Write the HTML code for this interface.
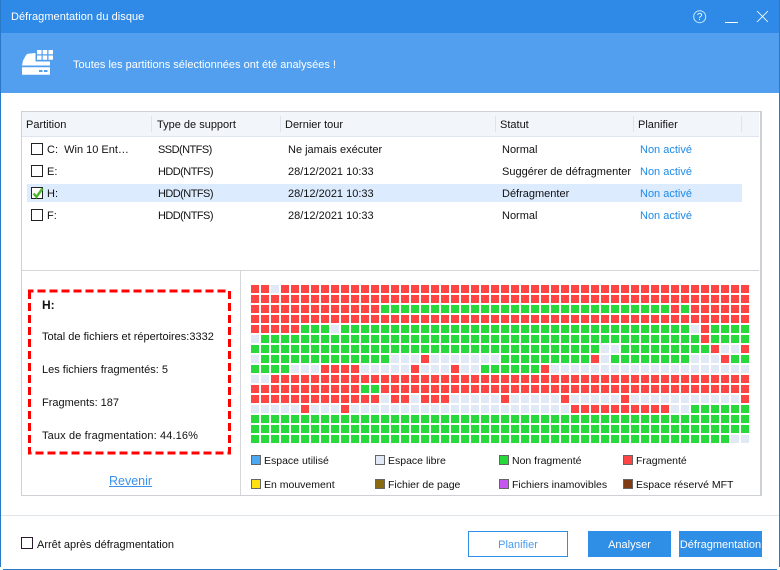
<!DOCTYPE html>
<html lang="fr"><head><meta charset="utf-8"><title>Défragmentation du disque</title>
<style>
html,body{margin:0;padding:0;background:#fff}
#w{position:relative;width:780px;height:570px;overflow:hidden;background:#fff;font-family:"Liberation Sans",sans-serif;font-size:11px;color:#111}
#w div{position:absolute}
.t{position:absolute;white-space:nowrap;line-height:14px;height:14px}
.cb{position:absolute;width:10px;height:10px;border:1px solid #222;background:#fff}
.l{color:#1e8ae8}
.lg{position:absolute;width:8px;height:8px;border:1px solid #666}
.s{font-size:10.5px}
.h{letter-spacing:-.55px}
.btn{position:absolute;text-align:center;line-height:28px;height:26px;font-size:11px}
</style></head><body>
<div id="w">
<div style="left:0;top:0;width:780px;height:33px;background:#2e8ae6"></div>
<div style="left:0;top:33px;width:780px;height:60px;background:#529fef"></div>
<div style="left:0;top:0;width:1px;height:567px;background:#2a78c8"></div>
<div style="left:779px;top:0;width:1px;height:567px;background:#2a78c8"></div>
<div style="left:3px;top:569px;width:774px;height:1px;background:#2a78c8"></div>
<span class="t" style="left:11px;top:10px;color:#fff;letter-spacing:.05px">Défragmentation du disque</span>
<svg style="position:absolute;left:690px;top:8px" width="85" height="18" viewBox="0 0 85 18" fill="none">
<circle cx="9.700" cy="8.700" r="6" stroke="#c4ecff" stroke-width="1"/>
<text x="9.700" y="12" font-family="Liberation Sans" font-size="10" fill="#fff" text-anchor="middle">?</text>
<path d="M35 14.500h13" stroke="#fff" stroke-width="1"/>
<path d="M67 3l11 11M78 3L67 14" stroke="#fff" stroke-width=".85"/>
</svg>
<svg style="position:absolute;left:0;top:0" width="60" height="80" fill="#fff">
<path d="M22 65.500L23 60.500L25 57Q26 54.300 28 53.700L35.500 53V61.500H50V65.500Z"/>
<path d="M22 67.300h28v7.500H22z"/>
<path d="M39 70h3.500v2H39zM44 70h3.500v2H44z" fill="#529fef"/>
<path d="M37 50h4.500v4.300H37zM42.700 50h4.500v4.300h-4.500zM48.500 50H53v4.300h-4.500zM37 55.500h4.500v4.300H37zM42.700 55.500h4.500v4.300h-4.500zM48.500 55.500H53v4.300h-4.500z"/>
</svg>
<span class="t" style="left:73px;top:58px;color:#fff">Toutes les partitions sélectionnées ont été analysées !</span>

<div style="left:21px;top:111px;width:738px;height:383px;border:1px solid #cdd0d4;border-width:1px 2px 1px 1px"></div>
<div style="left:22px;top:112px;width:737px;height:24px;background:#f2f5fa;border-bottom:1px solid #dfe5f0"></div>
<div style="left:151px;top:116px;width:1px;height:16px;background:#dfe4ec"></div>
<div style="left:280px;top:116px;width:1px;height:16px;background:#dfe4ec"></div>
<div style="left:495px;top:116px;width:1px;height:16px;background:#dfe4ec"></div>
<div style="left:633px;top:116px;width:1px;height:16px;background:#dfe4ec"></div>
<div style="left:741px;top:116px;width:1px;height:16px;background:#dfe4ec"></div>
<span class="t" style="left:26px;top:118px">Partition</span>
<span class="t" style="left:157px;top:118px">Type de support</span>
<span class="t" style="left:285px;top:118px">Dernier tour</span>
<span class="t" style="left:500px;top:118px">Statut</span>
<span class="t" style="left:638px;top:118px">Planifier</span>

<div style="left:27px;top:184px;width:715px;height:18px;background:#dcebfd"></div>
<span class="cb" style="left:31px;top:143px"></span>
<span class="cb" style="left:31px;top:165px"></span>
<span class="cb" style="left:31px;top:187px"></span>
<span class="cb" style="left:31px;top:209px"></span>
<svg style="position:absolute;left:31px;top:186px" width="14" height="14"><path d="M2.500 7.500l3 3.300 6-8.300" fill="none" stroke="#4cb82a" stroke-width="2.400"/></svg>
<span class="t" style="left:47px;top:143px">C:&nbsp; Win 10 Ent…</span>
<span class="t" style="left:47px;top:165px">E:</span>
<span class="t" style="left:47px;top:187px">H:</span>
<span class="t" style="left:47px;top:209px">F:</span>
<span class="t h" style="left:158px;top:143px">SSD(NTFS)</span>
<span class="t h" style="left:158px;top:165px">HDD(NTFS)</span>
<span class="t h" style="left:158px;top:187px">HDD(NTFS)</span>
<span class="t h" style="left:158px;top:209px">HDD(NTFS)</span>
<span class="t" style="left:288px;top:143px">Ne jamais exécuter</span>
<span class="t" style="left:288px;top:165px">28/12/2021 10:33</span>
<span class="t" style="left:288px;top:187px">28/12/2021 10:33</span>
<span class="t" style="left:288px;top:209px">28/12/2021 10:33</span>
<span class="t" style="left:502px;top:143px">Normal</span>
<span class="t" style="left:502px;top:165px">Suggérer de défragmenter</span>
<span class="t" style="left:502px;top:187px">Défragmenter</span>
<span class="t" style="left:502px;top:209px">Normal</span>
<span class="t l" style="left:640px;top:143px">Non activé</span>
<span class="t l" style="left:640px;top:165px">Non activé</span>
<span class="t l" style="left:640px;top:187px">Non activé</span>
<span class="t l" style="left:640px;top:209px">Non activé</span>

<div style="left:22px;top:270px;width:737px;height:1px;background:#d4d6da"></div>
<div style="left:240px;top:270px;width:1px;height:225px;background:#d4d6da"></div>
<svg style="position:absolute;left:27px;top:288px" width="206" height="169" fill="none"><rect x="2.500" y="3" width="200" height="162" stroke="#ff0000" stroke-width="3" stroke-dasharray="8 4" stroke-dashoffset="4"/></svg>
<span class="t" style="left:42px;top:298px;font-weight:700;font-size:12px">H:</span>
<span class="t" style="left:42px;top:330px">Total de fichiers et répertoires:3332</span>
<span class="t" style="left:42px;top:363px">Les fichiers fragmentés: 5</span>
<span class="t" style="left:42px;top:396px">Fragments: 187</span>
<span class="t" style="left:42px;top:429px;letter-spacing:.13px">Taux de fragmentation: 44.16%</span>
<span class="t" style="left:109px;top:474px;font-size:12.500px;color:#3a92ea;text-decoration:underline">Revenir</span>

<svg style="position:absolute;left:0;top:0" width="780" height="570" fill="none" stroke-width="8" stroke-dasharray="8 2">
<path stroke="#ff4444" d="M251 289h18M281 289h468M251 299h498M251 309h128M671 309h8M691 309h58M251 319h498M251 329h48M701 329h8M701 339h8M711 349h8M741 349h8M421 359h8M591 359h8M721 359h8M321 369h38M411 369h8M451 369h8M541 369h8M271 379h478M251 389h108M381 389h368M251 399h128M391 399h18M421 399h28M501 399h8M561 399h8M621 399h8M741 399h8M301 409h8M341 409h8M571 409h98"/>
<path stroke="#28d93c" d="M381 309h288M681 309h8M301 329h28M341 329h348M711 329h38M261 339h438M711 339h38M251 349h348M621 349h88M261 359h128M501 359h88M611 359h78M731 359h18M251 369h38M481 369h58M361 389h18M691 409h58M251 419h498M251 429h498M251 439h478"/>
<path stroke="#e0e9f5" d="M271 289h8M331 329h8M691 329h8M251 339h8M601 349h18M721 349h18M251 359h8M391 359h28M431 359h68M601 359h8M691 359h28M291 369h28M361 369h48M421 369h28M461 369h18M551 369h198M251 379h18M381 399h8M411 399h8M451 399h48M511 399h48M571 399h48M631 399h108M251 409h48M311 409h28M351 409h218M671 409h18M731 439h18"/>
</svg>

<span class="lg" style="left:251px;top:455px;background:#4da6f0"></span>
<span class="lg" style="left:375px;top:455px;background:#e0e9f5"></span>
<span class="lg" style="left:499px;top:455px;background:#28d93c"></span>
<span class="lg" style="left:623px;top:455px;background:#ff4444"></span>
<span class="lg" style="left:251px;top:479px;background:#ffe010"></span>
<span class="lg" style="left:375px;top:479px;background:#8a6a10"></span>
<span class="lg" style="left:499px;top:479px;background:#c455f0"></span>
<span class="lg" style="left:623px;top:479px;background:#7f3a14"></span>
<span class="t s" style="left:264px;top:454px">Espace utilisé</span>
<span class="t s" style="left:388px;top:454px">Espace libre</span>
<span class="t s" style="left:512px;top:454px">Non fragmenté</span>
<span class="t s" style="left:636px;top:454px">Fragmenté</span>
<span class="t s" style="left:264px;top:478px">En mouvement</span>
<span class="t s" style="left:388px;top:478px">Fichier de page</span>
<span class="t s" style="left:512px;top:478px">Fichiers inamovibles</span>
<span class="t s" style="left:636px;top:478px">Espace réservé MFT</span>

<div style="left:1px;top:515px;width:778px;height:1px;background:#e0e5ea"></div>
<span class="cb" style="left:21px;top:537px;border-color:#2a1a30"></span>
<span class="t" style="left:37px;top:538px">Arrêt après défragmentation</span>
<span class="btn" style="left:468px;top:531px;width:98px;height:24px;line-height:26px;border:1px solid #2f8ee6;color:#4a9af0">Planifier</span>
<span class="btn" style="left:588px;top:531px;width:83px;background:#2f8ee6;color:#fff">Analyser</span>
<span class="btn" style="left:679px;top:531px;width:83px;background:#2f8ee6;color:#fff">Défragmentation</span>
</div>
</body></html>
